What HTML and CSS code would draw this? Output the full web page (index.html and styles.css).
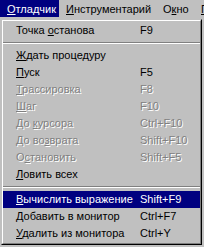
FILE: index.html
```html
<!DOCTYPE html>
<html>
<head>
<meta charset="utf-8">
<link rel="stylesheet" href="styles.css">
</head>
<body>
<div class="screen">
  <div class="menubar">
    <div class="mb-item mb-w1 mb-active"><u>О</u>тладчик</div>
    <div class="mb-item mb-w2"><u>И</u>нструментарий</div>
    <div class="mb-item mb-w3">О<u>к</u>но</div>
    <div class="mb-item mb-w4"><u>П</u></div>
  </div>
  <div class="popup">
    <div class="popup-inner">
      <div class="item"><span class="label">Точка <u>о</u>станова</span><span class="key">F9</span></div>
      <div class="sep"></div>
      <div class="item"><span class="label"><u>Ж</u>дать процедуру</span><span class="key"></span></div>
      <div class="item"><span class="label"><u>П</u>уск</span><span class="key">F5</span></div>
      <div class="item disabled"><span class="label"><u>Т</u>рассировка</span><span class="key">F8</span></div>
      <div class="item disabled"><span class="label"><u>Ш</u>аг</span><span class="key">F10</span></div>
      <div class="item disabled"><span class="label">До <u>к</u>урсора</span><span class="key">Ctrl+F10</span></div>
      <div class="item disabled"><span class="label">До во<u>з</u>врата</span><span class="key">Shift+F10</span></div>
      <div class="item disabled"><span class="label">О<u>с</u>тановить</span><span class="key">Shift+F5</span></div>
      <div class="item"><span class="label"><u>Л</u>овить всех</span><span class="key"></span></div>
      <div class="sep"></div>
      <div class="item selected"><span class="label"><u>В</u>ычислить выражение</span><span class="key">Shift+F9</span></div>
      <div class="item"><span class="label"><u>Д</u>обавить в монитор</span><span class="key">Ctrl+F7</span></div>
      <div class="item"><span class="label"><u>У</u>далить из монитора</span><span class="key">Ctrl+Y</span></div>
    </div>
  </div>
</div>
</body>
</html>
```
FILE: styles.css
```css
html, body {
  margin: 0;
  padding: 0;
  background: #c0c0c0;
  overflow: hidden;
}
.screen {
  width: 204px;
  height: 247px;
  background: #c0c0c0;
  font-family: "Liberation Sans", Arial, sans-serif;
  font-size: 11px;
  color: #000;
  overflow: hidden;
}
u {
  text-decoration: underline;
  text-underline-offset: 1px;
}
.menubar {
  display: flex;
  height: 19px;
  white-space: nowrap;
  overflow: hidden;
}
.mb-item {
  height: 17px;
  line-height: 16px;
  padding: 1px 0 0 7px;
  box-sizing: border-box;
  flex: none;
}
.mb-w1 { width: 59px; }
.mb-w2 { width: 97px; }
.mb-w3 { width: 38px; }
.mb-w4 { width: 10px; }
.mb-active {
  background: #000080;
  color: #fff;
}
.popup {
  width: 201px;
  margin-left: 1px;
  border: 1px solid;
  border-color: #c0c0c0 #000 #000 #c0c0c0;
  box-sizing: border-box;
}
.popup-inner {
  border: 1px solid;
  border-color: #fff #808080 #808080 #fff;
  padding: 1px 0;
}
.item {
  display: flex;
  height: 17px;
  line-height: 17px;
  padding-left: 13px;
  white-space: nowrap;
}
.label {
  width: 124px;
  flex: none;
}
.key {
  flex: 1;
}
.disabled {
  color: #808080;
  text-shadow: 1px 1px 0 #fff;
}
.selected {
  background: #000080;
  color: #fff;
}
.sep {
  height: 0;
  margin: 3px 0;
  border-top: 1px solid #808080;
  border-bottom: 1px solid #fff;
}
```
